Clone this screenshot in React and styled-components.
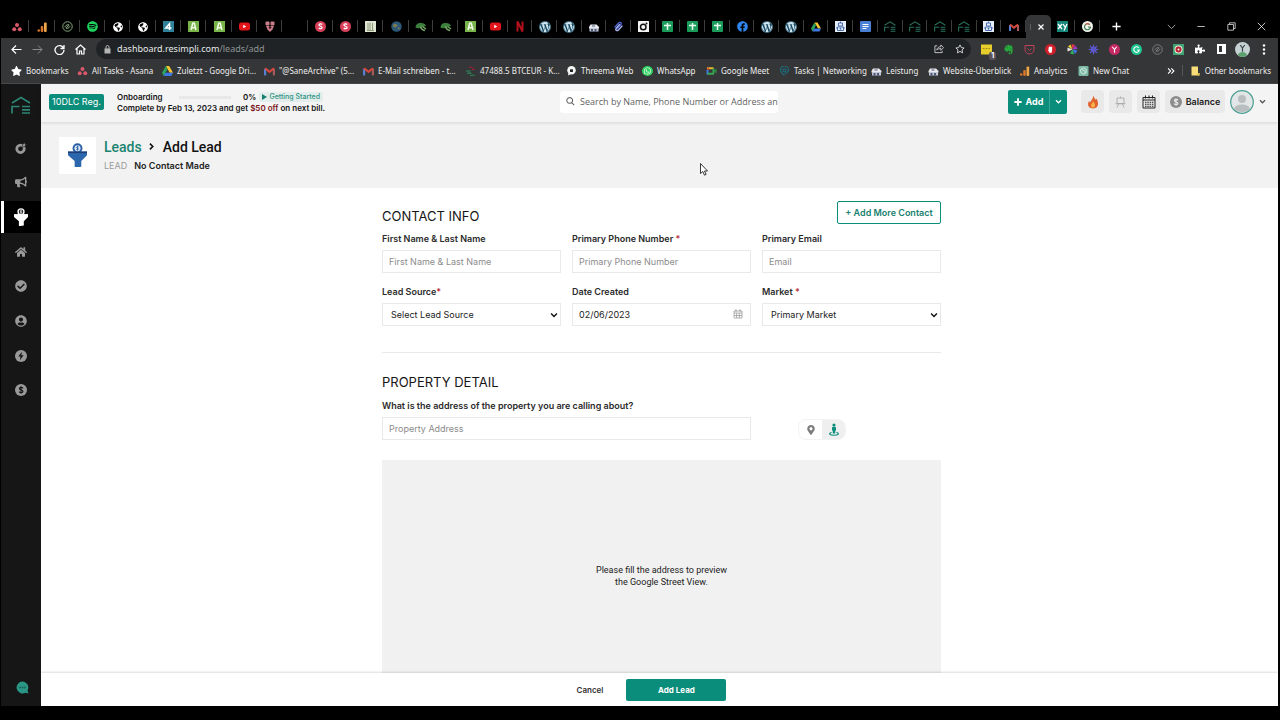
import React from "react";
import styled, { createGlobalStyle, css } from "styled-components";
import {
  FaSpotify, FaGlobeAmericas, FaWordpress, FaFacebook, FaWhatsapp, FaEvernote,
  FaBullhorn, FaHome, FaCheckCircle, FaUserCircle, FaPuzzlePiece, FaMapMarkerAlt, FaStar,
} from "react-icons/fa";

const GREEN = "#0b8d7b";
const UI = '"Inter", "Roboto", sans-serif';
const TITLE = '"Roboto", "Inter", sans-serif';
const CHROME = '"Noto Sans", "Open Sans", sans-serif';

const GlobalStyle = createGlobalStyle`
  * { box-sizing: border-box; }
  body { margin: 0; background: #000; font-family: ${UI}; }
  button, input, select { font: inherit; margin: 0; }
  button { border: 0; padding: 0; background: none; cursor: pointer; color: inherit; }
  a { text-decoration: none; color: inherit; }
  svg { display: block; flex: none; }
`;

/* ---------- icons ---------- */

const Asana = ({ s = 10 }) => (
  <svg width={s} height={s} viewBox="0 0 20 20" fill="#d9596b">
    <circle cx="10" cy="6" r="4" /><circle cx="4.5" cy="14.5" r="4" /><circle cx="15.5" cy="14.5" r="4" />
  </svg>
);
const Analytics = ({ s = 10 }) => (
  <svg width={s} height={s} viewBox="0 0 20 20">
    <circle cx="3.5" cy="17" r="2.6" fill="#d9762a" />
    <rect x="7.5" y="8" width="5" height="12" rx="2" fill="#d9762a" />
    <rect x="14" y="1" width="5.4" height="19" rx="2" fill="#f0a548" />
  </svg>
);
const LinkRing = ({ s = 11, c = "#86a67a" }) => (
  <svg width={s} height={s} viewBox="0 0 22 22" fill="none" stroke={c} strokeWidth="2">
    <circle cx="11" cy="11" r="9.5" />
    <path d="M6 12.5c0-3 3-5 6-5h2M16 9.500c0 3-3 5-6 5H8M7.500 14l7-6" />
  </svg>
);
const Four = () => (
  <svg width="11" height="11" viewBox="0 0 22 22">
    <rect width="22" height="22" fill="#2f8299" />
    <path d="M13 18V5.500L5.500 14H17" fill="none" stroke="#fff" strokeWidth="3" />
  </svg>
);
const ATile = () => (
  <svg width="11" height="11" viewBox="0 0 22 22">
    <rect width="22" height="22" fill="#78b449" />
    <path d="M6 18l3.500-13.500h3L16 18M8.500 13.500h5" fill="none" stroke="#f2fae9" strokeWidth="3" />
  </svg>
);
const YouTube = () => (
  <svg width="11" height="11" viewBox="0 0 22 22">
    <rect y="3" width="22" height="16" rx="4.500" fill="#e3141a" />
    <path d="M8.500 7.500v7l6-3.500z" fill="#fff" />
  </svg>
);
const Hearts = () => (
  <svg width="10" height="11" viewBox="0 0 20 22" fill="#c97c8a">
    <rect x="1" y="1" width="8" height="8" rx="2" /><rect x="11" y="1" width="8" height="8" rx="2" />
    <path d="M2 10h16l-3 7-5 5-5-5z" /><circle cx="10" cy="13" r="2.500" fill="#3b1118" />
  </svg>
);
const SDisc = () => (
  <svg width="11" height="11" viewBox="0 0 22 22">
    <circle cx="11" cy="11" r="11" fill="#d8405a" />
    <path d="M14.500 7c-2-2-7-1.500-6.500 1.200.5 2.500 6 2 6.200 4.800.2 2.800-4.700 3-6.700 1" fill="none" stroke="#fff" strokeWidth="2.400" />
  </svg>
);
const Columns = () => (
  <svg width="11" height="11" viewBox="0 0 22 22">
    <rect width="22" height="22" fill="#dfe5d3" />
    <path d="M6 4v14M10 3v16M15 4v14M4 19h14" stroke="#8d9a78" strokeWidth="2" fill="none" />
  </svg>
);
const Earth = () => (
  <svg width="11" height="11" viewBox="0 0 22 22">
    <circle cx="11" cy="11" r="10.500" fill="#2c5878" />
    <path d="M4 8c4-5 7-1 9 0s-2 4-4 5-6-2-5-5zM14 13c3-1 4 1 3 3s-4 1-3-3z" fill="#7b7a52" />
  </svg>
);
const Tree = () => (
  <svg width="12" height="10" viewBox="0 0 24 20">
    <path d="M1 11c0-6 5-10 11-9 5 0 9 2 10 6l-7 2c-4 2-10 4-14 1z" fill="#3b7f3d" />
    <path d="M11 9c1 4 4 7 9 8M15 9l7 5" stroke="#77a866" strokeWidth="2.800" fill="none" />
  </svg>
);
const NTile = () => (
  <svg width="8" height="11" viewBox="0 0 16 22" fill="none" stroke="#b2111d" strokeWidth="4">
    <path d="M3 21V1l10 20V1" />
  </svg>
);
const Store = ({ s = 10 }) => (
  <svg width={s} height={s} viewBox="0 0 20 20">
    <path d="M3 5h12l5 5v3H0v-3z" fill="#e7e9ef" /><path d="M1 12h18v7H1z" fill="#c3c8d6" />
    <path d="M4 14h4v5H4zM11 14h4v5h-4zM6 7h6v2H6z" fill="#4d5878" />
  </svg>
);
const Swirl = () => (
  <svg width="11" height="11" viewBox="0 0 22 22" fill="none" strokeLinecap="round" strokeWidth="2.600">
    <path d="M4 12l7-8c3-3 7 0 5 3l-8 9" stroke="#4c63d2" /><path d="M18 10l-7 8c-3 3-7 0-5-3l7-8" stroke="#a9b4f0" />
  </svg>
);
const Camera = () => (
  <svg width="11" height="11" viewBox="0 0 22 22">
    <rect width="22" height="22" rx="1" fill="#f4f4f4" />
    <circle cx="10.500" cy="12" r="5.500" fill="none" stroke="#111" strokeWidth="3" /><circle cx="17" cy="5" r="2" fill="#111" />
  </svg>
);
const Sheets = () => (
  <svg width="11" height="11" viewBox="0 0 22 22">
    <rect width="22" height="22" rx="2" fill="#1c9c5a" />
    <path d="M4 9h14M11 4v14" stroke="#e9fff2" strokeWidth="3" />
  </svg>
);
const Drive = ({ s = 10 }) => (
  <svg width={s} height={s} viewBox="0 0 20 18">
    <path d="M7 0h6l7 12h-6z" fill="#f5c431" /><path d="M7 0L0 12l3 6 7-12z" fill="#2ba35c" />
    <path d="M6 12h14l-3 6H3z" fill="#3c78e0" />
  </svg>
);
const Robot = () => (
  <svg width="11" height="11" viewBox="0 0 22 22">
    <rect width="22" height="22" fill="#e6eefb" />
    <path d="M7 4h8v6H7zM5 12h12v7H5zM11 1v3M2 14h3M17 14h3" fill="none" stroke="#4b6fae" strokeWidth="2" />
    <circle cx="11" cy="15.500" r="1.800" fill="#4b6fae" />
  </svg>
);
const Docs = () => (
  <svg width="11" height="11" viewBox="0 0 22 22">
    <rect width="22" height="22" rx="2" fill="#4a7fd6" />
    <path d="M5 7h12M5 11h12M5 15h8" stroke="#fff" strokeWidth="2.200" />
  </svg>
);
const HouseLogo = ({ w = 20, c = "#2c8575", t = 1.7 }) => (
  <svg width={w} height={w * 0.9} viewBox="0 0 20 18" fill="none" stroke={c} strokeWidth={t}>
    <path d="M1 7l9-5.500L19 7M1 17.500V10.500h7.500M11 10.500h8M11 13.800h8M11 17h8" />
  </svg>
);
const Gmail = ({ s = 10 }) => (
  <svg width={s} height={s * 0.8} viewBox="0 0 20 16" fill="none" strokeWidth="4">
    <path d="M2 16V4" stroke="#5b7fd0" /><path d="M18 16V4" stroke="#a85a58" />
    <path d="M2 3l8 6.500L18 3" stroke="#d8473d" />
  </svg>
);
const XY = () => (
  <svg width="11" height="11" viewBox="0 0 22 22">
    <rect width="22" height="22" fill="#16877a" />
    <path d="M2 6l8 10M10 6L2 16M12 6l4 6M20 6l-6 13" stroke="#fff" strokeWidth="2.600" fill="none" />
  </svg>
);
const Grammar = () => (
  <svg width="11" height="11" viewBox="0 0 22 22">
    <circle cx="11" cy="11" r="11" fill="#f3f3ee" />
    <path d="M15.500 7.500A6 6 0 1 0 17 12h-5" fill="none" stroke="#3f7d55" strokeWidth="2.400" />
    <path d="M7 7a6 6 0 0 1 8 0" stroke="#d65a45" strokeWidth="2.400" fill="none" />
  </svg>
);
const Wp = styled(FaWordpress)`
  width: 12px; height: 12px; color: #cfe6f1; background: #17475e; border-radius: 50%;
`;
const WhatsApp = styled(FaWhatsapp)`
  background: #2fd060; color: #fff; border-radius: 50%; padding: 1px;
`;
const Tasks = () => (
  <svg width="10" height="10" viewBox="0 0 20 20" fill="none" stroke="#1d6d7e" strokeWidth="2.400">
    <path d="M10 19C5 15 2 12 2 8a8 8 0 0 1 16 0c0 4-5 7-8 7" /><circle cx="10" cy="8.500" r="3" />
  </svg>
);
const Kraken = () => (
  <svg width="12" height="12" viewBox="0 0 24 24" fill="none" strokeWidth="2.600">
    <path d="M1 12h11M4 17h10M11 22h11" stroke="#2b8a5f" /><path d="M8 3h9M15 8h7" stroke="#a3213a" />
  </svg>
);
const Threema = () => (
  <svg width="10" height="10" viewBox="0 0 20 20">
    <circle cx="10" cy="8.500" r="8.500" fill="#f5f5f5" /><path d="M4 13l-1 6 6-3z" fill="#f5f5f5" />
    <rect x="7" y="6.500" width="6" height="5.500" rx="1" fill="#222" />
  </svg>
);
const Meet = () => (
  <svg width="11" height="10" viewBox="0 0 22 20" fill="none" strokeWidth="4">
    <path d="M3 17V8" stroke="#3b7ce8" /><path d="M2 4.500h13" stroke="#e8b92e" /><path d="M15 5v10" stroke="#36a852" />
    <path d="M3 15.500h13" stroke="#36a852" /><path d="M16 10l5-5v10z" fill="#2a9147" stroke="none" />
    <path d="M1 7l5-5v5z" fill="#df4335" stroke="none" />
  </svg>
);
const Gpt = () => (
  <svg width="11" height="11" viewBox="0 0 22 22">
    <rect width="22" height="22" rx="3" fill="#7cb8a3" />
    <path d="M11 4l6 3.500v7L11 18l-6-3.500v-7zM8 8l6 3v4" fill="none" stroke="#e4f4ee" strokeWidth="1.800" />
  </svg>
);
const Folder = () => (
  <svg width="9" height="10" viewBox="0 0 18 20"><path d="M1 1h13v13h3v5H1z" fill="#f7de78" /><path d="M14 14h3v5h-5z" fill="#d9b94a" /></svg>
);
const Line = ({ s = 11, d, w = 2, c = "#fff", fill = "none" }) => (
  <svg width={s} height={s} viewBox="0 0 22 22" fill={fill} stroke={c} strokeWidth={w}><path d={d} /></svg>
);
const Disc = ({ s = 10, c, children }) => (
  <svg width={s} height={s} viewBox="0 0 20 20"><circle cx="10" cy="10" r="10" fill={c} />{children}</svg>
);
const Dollar = ({ s = 12, c = "#999", ink = "#161616" }) => (
  <Disc s={s} c={c}>
    <path d="M13.300 7.300c-.6-2-6-2.300-6 .4 0 3 6 1.600 6 4.600 0 2.800-6 2.500-6.600.3M10 3.600v12.800" fill="none" stroke={ink} strokeWidth="1.900" />
  </Disc>
);
const Funnel = ({ w, body, coin, ink, shade }) => (
  <svg width={w} height={w * 1.3} viewBox="0 0 20 26">
    <circle cx="10" cy="5.500" r="5.200" fill={coin} />
    <path d="M0 9h20v4l-6 6v6l-7 1v-7l-7-6z" fill={body} />
    <path d="M0 9h20v1.600H0z" fill={shade} />
    <circle cx="10" cy="5.500" r="3.200" fill={ink} />
    <path d="M11.200 4.200c-2-1-3 .8-1.200 1.300s1 2.200-1.300 1.300M10 3v5" stroke={coin} strokeWidth=".9" fill="none" />
  </svg>
);
const Target = () => (
  <svg width="12" height="12" viewBox="0 0 24 24">
    <circle cx="11" cy="13.500" r="7.500" fill="none" stroke="#999" strokeWidth="5.500" />
    <path d="M13.500 11l2-6 4-4 .500 3.500L23 5l-3.500 4z" fill="#999" stroke="#161616" strokeWidth="1.200" />
  </svg>
);
const Flame = () => (
  <svg width="12" height="14" viewBox="0 0 24 28">
    <path d="M13 1c1 5 3 6 5 9l1-3c4 6 6 20-7 20C2 27 0 19 4 12l2 3c2-4 6-7 7-14z" fill="#e0622e" />
    <path d="M12 12c2 4 5 5 4 10-1 4-7 4-8 0-1-4 3-5 4-10z" fill="#f5b14a" />
  </svg>
);
const Board = () => (
  <svg width="11" height="12" viewBox="0 0 22 24" fill="none" stroke="#a9a9a9" strokeWidth="1.800">
    <path d="M4 4h14v11H4zM1 15.500h20M7 16l-3 7M15 16l3 7M11 1v3" />
  </svg>
);
const Calendar = () => (
  <svg width="14" height="14" viewBox="0 0 28 28" fill="none" stroke="#222" strokeWidth="2">
    <path d="M2 5h24v21H2zM2 10h24" /><path d="M7 1v6M14 1v6M21 1v6" />
    <path d="M6 14.500h17M6 18.500h17M6 22.500h17" strokeDasharray="3 1.600" strokeWidth="2.400" />
  </svg>
);
const DateIcon = () => (
  <svg width="10" height="10" viewBox="0 0 20 20" fill="none" stroke="#9a9a9a" strokeWidth="1.500">
    <path d="M2 4h16v14H2zM2 8h16M7.300 8v10M12.700 8v10M2 13h16" /><path d="M6 1v4M14 1v4" strokeWidth="2.400" />
  </svg>
);
const Pegman = () => (
  <svg width="10" height="13" viewBox="0 0 20 26" fill={GREEN}>
    <circle cx="10" cy="4" r="3.200" /><path d="M6 9c0-2 8-2 8 0v6h-1.500v6h-5v-6H6z" />
    <path d="M5 18.500c-7 3-3 6 5 6s12-3 5-6" fill="none" stroke={GREEN} strokeWidth="2.400" />
  </svg>
);
const Bolt = () => <Disc s={12} c="#999"><path d="M11.500 3L5.500 11h3.700l-1 6 6.200-8.300h-3.800z" fill="#161616" /></Disc>;
const Chat = () => (
  <svg width="13" height="13" viewBox="0 0 26 26">
    <path d="M13 1a12 12 0 1 0 6 22.500l6 1.500-2-6A12 12 0 0 0 13 1z" fill="#2b9686" />
    <path d="M6.500 13h13" stroke="#155e53" strokeWidth="3" strokeDasharray="3.500 1.500" />
  </svg>
);

/* ---------- browser frame ---------- */

const Screen = styled.div`
  height: 100vh; display: flex; flex-direction: column; padding: 0 2px 14px 1px; background: #000; position: relative; overflow: hidden;
`;
const TabStrip = styled.nav`
  height: 38px; padding: 15px 12px 0 3px; display: flex; flex: none; color: #fff;
`;
const TabList = styled.div`flex: 1096 1 0; display: flex; min-width: 0;`;
const Tab = styled.button`
  flex: ${(p) => (p.$pinned ? 41 : 40)} 1 0; min-width: 0; display: flex; align-items: center; justify-content: center; position: relative;
  ${(p) => p.$active && css`background: #353637; border-radius: 5px 5px 0 0;`}
  &::after {
    content: ""; position: absolute; right: 0; top: 5px; height: 12px; width: 1px;
    background: ${(p) => (p.$active ? "transparent" : "#3d3d3d")};
  }
`;
const WindowControls = styled.div`
  flex: 154 1 0; display: flex; align-items: center; justify-content: space-between; padding-left: 12px;
`;
const Group = styled.div`display: flex; align-items: center; gap: ${(p) => p.$gap || 0}px;`;
const BareButton = styled.button`display: flex; align-items: center; justify-content: center;`;
const Toolbar = styled.div`
  height: 22px; flex: none; background: #353637; display: flex; align-items: center; padding: 0 3px 0 5px;
`;
const NavKeys = styled.div`width: 85px; display: flex; flex: none;
  button { flex: 1; }
`;
const Address = styled.div`
  flex: 1; min-width: 0; height: 20px; margin: 0 5px; border-radius: 10px; background: #1f2325; color: #e8e8e8;
  display: flex; align-items: center; gap: 6px; padding: 0 6px 0 8px; font: 9px/12px ${CHROME};
  p { flex: 1; margin: 0; } span { color: #8f9395; }
`;
const Extensions = styled.div`width: 299px; display: flex; flex: none;
  button { flex: 1; position: relative; }
`;
const Count = styled.span`
  position: absolute; right: 1px; bottom: -3px; width: 7px; height: 8px; border-radius: 2px; background: #5b525b; color: #fff;
  font: bold 7px/8px ${UI};
`;
const BookmarkBar = styled.nav`
  height: 24px; flex: none; background: #353637; border-bottom: 1px solid #484848; color: #eee;
  display: flex; align-items: center; padding: 0 7px 2px 10px; font: 8px/12px ${CHROME};
`;
const Bookmark = styled.a`
  width: ${(p) => (p.$w ? p.$w + "px" : "auto")}; display: flex; align-items: center; gap: 4px; white-space: nowrap; min-width: 0;
  svg { width: 11px; height: 10px; }
`;
const OtherMarks = styled.div`margin-left: auto; display: flex; align-items: center; gap: 7px;
  i { width: 1px; height: 11px; background: #555; }
`;

/* ---------- application ---------- */

const AppFrame = styled.div`flex: 1; min-height: 0; display: flex; background: #fff;`;
const Sidebar = styled.aside`
  width: 40px; flex: none; background: #161616; display: flex; flex-direction: column; align-items: stretch;
`;
const Brand = styled.a`height: 48px; display: flex; justify-content: center; padding-top: 12px;`;
const SideNav = styled.nav`height: 274px; display: flex; flex-direction: column; gap: 3px; color: #999; font-size: 12px;`;
const SideLink = styled.a`
  flex: 1; display: flex; align-items: center; justify-content: center; border-left: 3px solid transparent; padding-right: 3px;
  ${(p) => p.$active && css`background: #000; border-left-color: #fff;`}
`;
const Help = styled.button`margin-top: auto; padding: 0 0 12px 3px; display: flex; justify-content: center;`;
const Page = styled.div`flex: 1; min-width: 0; display: flex; flex-direction: column;`;
const Header = styled.header`
  height: 38px; flex: none; background: #f4f4f4; box-shadow: 0 1px 3px rgba(0, 0, 0, 0.12); position: relative;
  display: flex; align-items: center; padding: 0 12px 3px 8px;
`;
const HeaderLeft = styled.div`flex: 22 1 0; display: flex; align-items: center; gap: 13px;`;
const HeaderRight = styled.div`flex: 21 1 0; display: flex; align-items: center; justify-content: flex-end;`;
const Pill = styled.button`
  height: 16px; width: 55px; border-radius: 2px; background: ${GREEN}; color: #fff; font-size: 9px; white-space: nowrap;
`;
const Onboarding = styled.div`
  color: #161616; font-size: 8px; line-height: 11px; font-weight: 600; padding-top: 2px; white-space: nowrap;
  em { font-style: normal; color: #7c1420; }
`;
const OnboardRow = styled.div`
  display: flex; align-items: center; width: 206px;
  progress { appearance: none; width: 52px; height: 3px; border: 0; background: #e8e8e8; margin: 0 12px 0 auto;
    &::-webkit-progress-bar { background: #e8e8e8; } }
`;
const Started = styled.button`
  display: flex; align-items: center; gap: 2px; height: 10px; margin-left: 3px; padding: 0 3px; background: #e3edeb; color: #2f9384;
  font-size: 7px; font-weight: 500; line-height: 10px; border-radius: 2px; white-space: nowrap;
`;
const Search = styled.label`
  width: 218px; height: 22px; background: #fff; border-radius: 3px; display: flex; align-items: center; gap: 5px; padding: 0 0 0 6px;
  input { flex: 1; min-width: 0; border: 0; outline: 0; padding: 0; background: none; font: 9px/14px "Open Sans", sans-serif; }
  input::placeholder { color: #5f5f5f; opacity: 1; }
`;
const AddSplit = styled.div`
  display: flex; height: 24px; border-radius: 2px; overflow: hidden; background: ${GREEN}; color: #fff; font-size: 9px; font-weight: 700; margin-right: 14px;
  button { display: flex; align-items: center; justify-content: center; gap: 4px; }
  button:first-child { width: 41px; }
  button:last-child { width: 18px; border-left: 1px solid #3aa495; }
`;
const Tools = styled.div`display: flex; align-items: center; gap: 5px;`;
const ToolButton = styled.button`
  width: ${(p) => p.$w || 23}px; height: 23px; border-radius: 4px; background: #e9e9e9; display: flex; align-items: center; justify-content: center; gap: 4px;
  font-size: 9px; font-weight: 600; color: #222;
`;
const Crumbs = styled.section`
  height: 66px; flex: none; background: #f2f2f2; display: flex; align-items: center; gap: 8px; padding: 0 18px;
`;
const Tile = styled.div`width: 37px; height: 37px; background: #fff; display: flex; align-items: center; justify-content: center;`;
const CrumbText = styled.div`
  padding-top: 1px;
  h1 { margin: 0 0 4px; display: flex; align-items: center; gap: 6px; font: 500 14px/16px ${TITLE}; color: #111; }
  h1 a { color: #1a8470; } h1 span { margin-left: 2px; }
  p { margin: 0; display: flex; gap: 7px; font-size: 9px; line-height: 14px; color: #9b9b9b; }
  b { font-weight: 600; color: #222; }
`;
const Content = styled.main`flex: 1; min-height: 0; overflow-y: auto; scrollbar-width: none; padding-left: 4px;`;
const Form = styled.form`width: 100%; max-width: 559px; margin: 0 auto; padding: 13px 0 20px;`;
const SectionHead = styled.div`
  display: flex; justify-content: space-between; height: ${(p) => p.$h}px;
  h2 { margin: 0; padding-top: 7px; font: 400 13px/16px ${UI}; color: #161616; }
`;
const Outline = styled.button`
  height: 23px; width: 104px; border: 1px solid ${GREEN}; border-radius: 2px; color: #18806f; font-size: 9px; font-weight: 600; background: #fff;
`;
const Fields = styled.div`display: grid; grid-template-columns: repeat(3, 1fr); gap: 13px 11px;`;
const Field = styled.div`
  min-width: 0; position: relative; ${(p) => p.$wide && css`grid-column: span 2;`}
  label { display: block; font-size: 9px; line-height: 12px; font-weight: 600; color: #2b2b2b; margin-bottom: 5px; }
  label i { font-style: normal; color: #b8323c; }
`;
const box = css`
  display: block; width: 100%; height: 23px; border: 1px solid #e9e9e9; border-radius: 0; background: #fff; font-size: 9px; color: #222; outline: 0;
`;
const TextBox = styled.input`${box} padding: 0 6px; &::placeholder { color: #8c8c8c; opacity: 1; }`;
const Select = styled.select`${box} padding: 0 4px 0 8px; appearance: none;`;
const Adorn = styled.span`position: absolute; right: ${(p) => p.$r}px; bottom: ${(p) => p.$b}px; pointer-events: none;`;
const Rule = styled.hr`border: 0; height: 1px; background: #e9e9e9; margin: 26px 0 14px;`;
const ViewToggle = styled.div`
  align-self: end; justify-self: start; margin-left: 36px; height: 21px; width: 48px; border-radius: 8px; overflow: hidden; display: flex; border: 1px solid #f3f3f3;
  button { flex: 1; display: flex; align-items: center; justify-content: center; color: #7d7d7d; font-size: 10px; }
  button:last-child { background: #efefef; }
`;
const Preview = styled.div`
  margin-top: 20px; height: 232px; background: #f1f1f1; display: flex; align-items: center; justify-content: center; text-align: center;
  font: 9px/12px ${TITLE}; color: #222;
`;
const Footer = styled.footer`
  height: 33px; flex: none; background: #fff; box-shadow: 0 -1px 2px rgba(0, 0, 0, 0.14); position: relative;
  display: flex; align-items: center; justify-content: center; gap: 23px; padding-right: 16px; font-size: 8px; font-weight: 600; color: #333;
`;
const Primary = styled.button`width: 100px; height: 22px; border-radius: 2px; background: ${GREEN}; color: #fff; font-weight: 700;`;
const Pointer = styled.div`position: absolute; left: 700px; top: 163px;`;

const A = Asana, W = Wp, S = Sheets;
const Globe = () => <FaGlobeAmericas size={10} color="#fff" />;
const Logo = () => <HouseLogo w={12} c="#2a705d" t={1.8} />;
const Spot = () => <FaSpotify size={11} color="#1fd45d" />;
const Face = () => <FaFacebook size={11} color="#2f86ee" />;

const tabs = [
  A, Analytics, LinkRing, Spot, Globe, Globe, Four, ATile, ATile, YouTube, Hearts, null, SDisc, SDisc, Columns, Earth,
  Tree, Tree, ATile, YouTube, NTile, W, W, Store, Swirl, Camera, S, S, S, Face, W, W, Drive, Robot, Docs,
  Logo, Logo, Logo, Logo, Robot, Gmail, "active", XY, Grammar,
];

const bookmarks = [
  ["Bookmarks", 66, <FaStar color="#fff" />], ["All Tasks - Asana", 85, <Asana />], ["Zuletzt - Google Dri...", 102, <Drive />],
  ['"@SaneArchive" (5...', 99, <Gmail />], ["E-Mail schreiben - t...", 102, <Gmail />], ["47488.5 BTCEUR - K...", 101, <Kraken />],
  ["Threema Web", 76, <Threema />], ["WhatsApp", 64, <WhatsApp />], ["Google Meet", 73, <Meet />],
  ["Tasks | Networking", 92, <Tasks />], ["Leistung", 57, <Store />], ["Website-Überblick", 91, <Store />],
  ["Analytics", 59, <Analytics />], ["New Chat", 60, <Gpt />],
];

const extensions = [
  ["Notes", <><svg width="11" height="11" viewBox="0 0 22 22"><path d="M0 1h22v20H0z" fill="#e6cd2c" /><path d="M3 9h15" stroke="#a38c12" strokeWidth="2" strokeDasharray="4 2" /></svg><Count>1</Count></>],
  ["Evernote", <FaEvernote size={11} color="#27a83c" />],
  ["Pocket", <Line s={11} c="#c2405b" d="M2 3h18v8a9 9 0 0 1-18 0zM7 9l4 4 4-4" />],
  ["Blocker", <Disc s={11} c="#d01f2b"><path d="M7 5h6v6l-1 5H8l-2-4z" fill="#fff" /></Disc>],
  ["Color picker", <svg width="11" height="11" viewBox="0 0 22 22"><path d="M11 11L2 5l5-4z" fill="#f2d42c" /><path d="M11 11L9 0l7 2z" fill="#e3364c" /><path d="M11 11l6-8 4 7z" fill="#9a3fd0" /><path d="M11 11l10 2-5 7z" fill="#3c7be5" /><path d="M11 11l3 10-8-2z" fill="#30b760" /><path d="M11 11L1 7v8z" fill="#e5e5e5" /></svg>],
  ["Loom", <Line s={11} c="#5a56c9" w={2.4} d="M11 1v20M1 11h20M4 4l14 14M18 4L4 18M11 6a5 5 0 1 0 .1 0" />],
  ["Yoast", <Disc s={11} c="#c32a63"><path d="M6 5l4 5 4-5M10 10v6" stroke="#fff" strokeWidth="2" fill="none" /></Disc>],
  ["Grammar check", <Disc s={11} c="#1fc68f"><path d="M14 7a5 5 0 1 0 1 4h-4" stroke="#fff" strokeWidth="2" fill="none" /></Disc>],
  ["Links", <LinkRing s={11} c="#7b7b7b" />],
  ["Recorder", <svg width="11" height="11" viewBox="0 0 22 22"><path d="M0 0h22v22H0z" fill="#3fa372" /><circle cx="11" cy="11" r="8" fill="#f1e7e3" /><circle cx="11" cy="11" r="6" fill="#b5202e" /><circle cx="11" cy="11" r="2" fill="#fff" /></svg>],
  ["Extensions", <FaPuzzlePiece size={10} color="#fff" />],
  ["Side panel", <svg width="9" height="10" viewBox="0 0 18 20"><path d="M0 0h18v20H0z" fill="#fff" /><path d="M4 4h6v12H4z" fill="#353637" /></svg>],
  ["Profile", <Disc s={15} c="#c6d1d3"><path d="M7 4l3 4 3-4M10 8v5" stroke="#39434a" strokeWidth="1.600" fill="none" /><path d="M4 17c2-5 10-5 12 0-3 4-9 4-12 0z" fill="#5aa06f" /></Disc>],
  ["Menu", <svg width="4" height="11" viewBox="0 0 4 11" fill="#fff"><circle cx="2" cy="1.500" r="1.200" /><circle cx="2" cy="5.500" r="1.200" /><circle cx="2" cy="9.500" r="1.200" /></svg>],
];

const sideItems = [
  ["Dashboard", <Target />], ["Marketing", <FaBullhorn />],
  ["Leads", <Funnel w={14} body="#fff" coin="#fff" ink="#222" shade="#fff" />, true],
  ["Properties", <FaHome />], ["Tasks", <FaCheckCircle />], ["Contacts", <FaUserCircle />], ["Automation", <Bolt />], ["Accounting", <Dollar />],
];

const Caret = ({ c = "#fff", s = 8 }) => <Line s={s} c={c} w={4} d="M3 7l8 8 8-8" />;

function Browser() {
  return (
    <>
      <TabStrip>
        <TabList>
          {tabs.map((T, i) => T === "active" ? (
            <Tab key={i} $active aria-label="Close tab">
              <svg width="16" height="8" viewBox="0 0 32 16" fill="none" stroke="#fff"><path d="M1 2v12" stroke="#8a8a8a" /><path d="M17 3l10 10M27 3L17 13" strokeWidth="2.600" /></svg>
            </Tab>
          ) : (
            <Tab key={i} $pinned={i < 16} aria-label={"Tab " + (i + 1)}>{T && <T />}</Tab>
          ))}
        </TabList>
        <WindowControls>
          <BareButton aria-label="New tab"><Line s={9} w={3.4} d="M11 1v20M1 11h20" /></BareButton>
          <Group $gap={21}>
            <BareButton aria-label="Search tabs"><Line s={9} c="#bbb" d="M2 7l9 9 9-9" /></BareButton>
            <BareButton aria-label="Minimize"><Line s={9} c="#ddd" d="M1 11h18" /></BareButton>
            <BareButton aria-label="Restore"><Line s={9} c="#ddd" d="M2 6h14v14H2zM6 6V2h14v14h-4" /></BareButton>
            <BareButton aria-label="Close window"><Line s={9} c="#eee" d="M2 2l18 18M20 2L2 20" /></BareButton>
          </Group>
        </WindowControls>
      </TabStrip>
      <Toolbar>
        <NavKeys>
          <BareButton aria-label="Back"><Line d="M21 11H2M10 3l-8 8 8 8" w={2.4} /></BareButton>
          <BareButton aria-label="Forward"><Line c="#8a8a8a" d="M1 11h19M12 3l8 8-8 8" /></BareButton>
          <BareButton aria-label="Reload"><Line d="M19 8a9 9 0 1 0 1 4M20 2v7h-7" w={2.6} /></BareButton>
          <BareButton aria-label="Home"><Line d="M1 11l10-9 10 9M4 9v11h5v-6h4v6h5V9" w={2.4} /></BareButton>
        </NavKeys>
        <Address>
          <svg width="7" height="9" viewBox="0 0 14 18"><path d="M1 7h12v10H1z" fill="#b5b5b5" /><path d="M4 8V4a3 3 0 0 1 6 0v4" fill="none" stroke="#b5b5b5" strokeWidth="2" /></svg>
          <p>dashboard.resimpli.com<span>/leads/add</span></p>
          <Group $gap={11}>
            <BareButton aria-label="Share"><Line s={10} c="#ccc" d="M7 4H2v15h16v-4M6 13c1-5 5-7 9-7V2l6 6-6 6v-4c-4 0-7 1-9 3z" /></BareButton>
            <BareButton aria-label="Bookmark this page"><Line s={10} c="#ddd" d="M11 2l3 6 6 .7-4.500 4.300 1.200 6.500L11 16.300 5.300 19.500l1.200-6.500L2 8.700 8 8z" /></BareButton>
          </Group>
        </Address>
        <Extensions>
          {extensions.map(([name, icon]) => <BareButton key={name} aria-label={name}>{icon}</BareButton>)}
        </Extensions>
      </Toolbar>
      <BookmarkBar>
        {bookmarks.map(([name, w, icon]) => <Bookmark key={name} href="#" $w={w}>{icon}{name}</Bookmark>)}
        <OtherMarks>
          <Line s={8} w={3} d="M3 4l7 7-7 7M12 4l7 7-7 7" /><i />
          <Bookmark href="#"><Folder />Other bookmarks</Bookmark>
        </OtherMarks>
      </BookmarkBar>
    </>
  );
}

export default function App() {
  return (
    <Screen>
      <GlobalStyle />
      <Browser />
      <AppFrame>
        <Sidebar>
          <Brand href="#" aria-label="Home"><HouseLogo /></Brand>
          <SideNav>
            {sideItems.map(([name, icon, active]) => <SideLink key={name} href="#" aria-label={name} $active={active}>{icon}</SideLink>)}
          </SideNav>
          <Help aria-label="Chat"><Chat /></Help>
        </Sidebar>
        <Page>
          <Header>
            <HeaderLeft>
              <Pill>10DLC Reg.</Pill>
              <Onboarding>
                <OnboardRow>
                  <span>Onboarding</span><progress value="0" max="100" aria-label="Onboarding progress" /><span>0%</span>
                  <Started><svg width="5" height="6" viewBox="0 0 5 6"><path d="M0 0l5 3-5 3z" fill="#16806f" /></svg>Getting Started</Started>
                </OnboardRow>
                Complete by Feb 13, 2023 and get <em>$50 off</em> on next bill.
              </Onboarding>
            </HeaderLeft>
            <Search>
              <Line s={9} c="#666" w={2.6} d="M9 1.500a7 7 0 1 0 .1 0M14 14l6 6" />
              <input type="text" aria-label="Search" placeholder="Search by Name, Phone Number or Address an" />
            </Search>
            <HeaderRight>
              <AddSplit>
                <button><Line s={8} w={5} d="M11 1v20M1 11h20" />Add</button>
                <button aria-label="More add options"><Caret s={7} /></button>
              </AddSplit>
              <Tools>
                <ToolButton aria-label="Hot leads"><Flame /></ToolButton>
                <ToolButton aria-label="Board"><Board /></ToolButton>
                <ToolButton aria-label="Calendar"><Calendar /></ToolButton>
                <ToolButton $w={60}><Dollar s={12} c="#8d8d8d" ink="#e9e9e9" />Balance</ToolButton>
                <BareButton aria-label="Account">
                  <svg width="24" height="24" viewBox="0 0 24 24"><circle cx="12" cy="12" r="11.300" fill="#e3e6e6" stroke="#4ba093" strokeWidth="1.200" /><circle cx="12" cy="9" r="4" fill="#b9bebe" /><path d="M4 19c1-6 15-6 16 0-4 4-12 4-16 0z" fill="#b9bebe" /></svg>
                </BareButton>
                <BareButton aria-label="Account menu"><Caret c="#555" s={7} /></BareButton>
              </Tools>
            </HeaderRight>
          </Header>
          <Crumbs>
            <Tile><Funnel w={19} body="#2c66ad" coin="#2a5fa6" ink="#dbe9fa" shade="#1c3f75" /></Tile>
            <CrumbText>
              <h1><a href="#">Leads</a><Line s={7} c="#111" w={5} d="M6 2l9 9-9 9" /><span>Add Lead</span></h1>
              <p>LEAD <b>No Contact Made</b></p>
            </CrumbText>
          </Crumbs>
          <Content>
            <Form onSubmit={(e) => e.preventDefault()}>
              <SectionHead $h={32}><h2>CONTACT INFO</h2><Outline type="button">+ Add More Contact</Outline></SectionHead>
              <Fields>
                <Field><label htmlFor="name">First Name &amp; Last Name</label><TextBox id="name" placeholder="First Name & Last Name" /></Field>
                <Field><label htmlFor="phone">Primary Phone Number <i>*</i></label><TextBox id="phone" placeholder="Primary Phone Number" /></Field>
                <Field><label htmlFor="email">Primary Email</label><TextBox id="email" placeholder="Email" /></Field>
                <Field>
                  <label htmlFor="source">Lead Source<i>*</i></label>
                  <Select id="source"><option>Select Lead Source</option></Select><Adorn $r={3} $b={7}><Caret c="#111" /></Adorn>
                </Field>
                <Field>
                  <label htmlFor="date">Date Created</label>
                  <TextBox id="date" defaultValue="02/06/2023" /><Adorn $r={8} $b={7}><DateIcon /></Adorn>
                </Field>
                <Field>
                  <label htmlFor="market">Market <i>*</i></label>
                  <Select id="market"><option>Primary Market</option></Select><Adorn $r={3} $b={7}><Caret c="#111" /></Adorn>
                </Field>
              </Fields>
              <Rule />
              <SectionHead $h={33}><h2>PROPERTY DETAIL</h2></SectionHead>
              <Fields>
                <Field $wide><label htmlFor="address">What is the address of the property you are calling about?</label><TextBox id="address" placeholder="Property Address" /></Field>
                <ViewToggle>
                  <button type="button" aria-label="Map view"><FaMapMarkerAlt /></button>
                  <button type="button" aria-label="Street view"><Pegman /></button>
                </ViewToggle>
              </Fields>
              <Preview>Please fill the address to preview<br />the Google Street View.</Preview>
            </Form>
          </Content>
          <Footer><button>Cancel</button><Primary>Add Lead</Primary></Footer>
        </Page>
      </AppFrame>
      <Pointer>
        <svg width="8" height="13" viewBox="0 0 8 13"><path d="M.5.500v10l2.300-2 1.700 3.700 1.600-.8-1.600-3.400h3z" fill="#fff" stroke="#222" strokeWidth=".9" /></svg>
      </Pointer>
    </Screen>
  );
}
